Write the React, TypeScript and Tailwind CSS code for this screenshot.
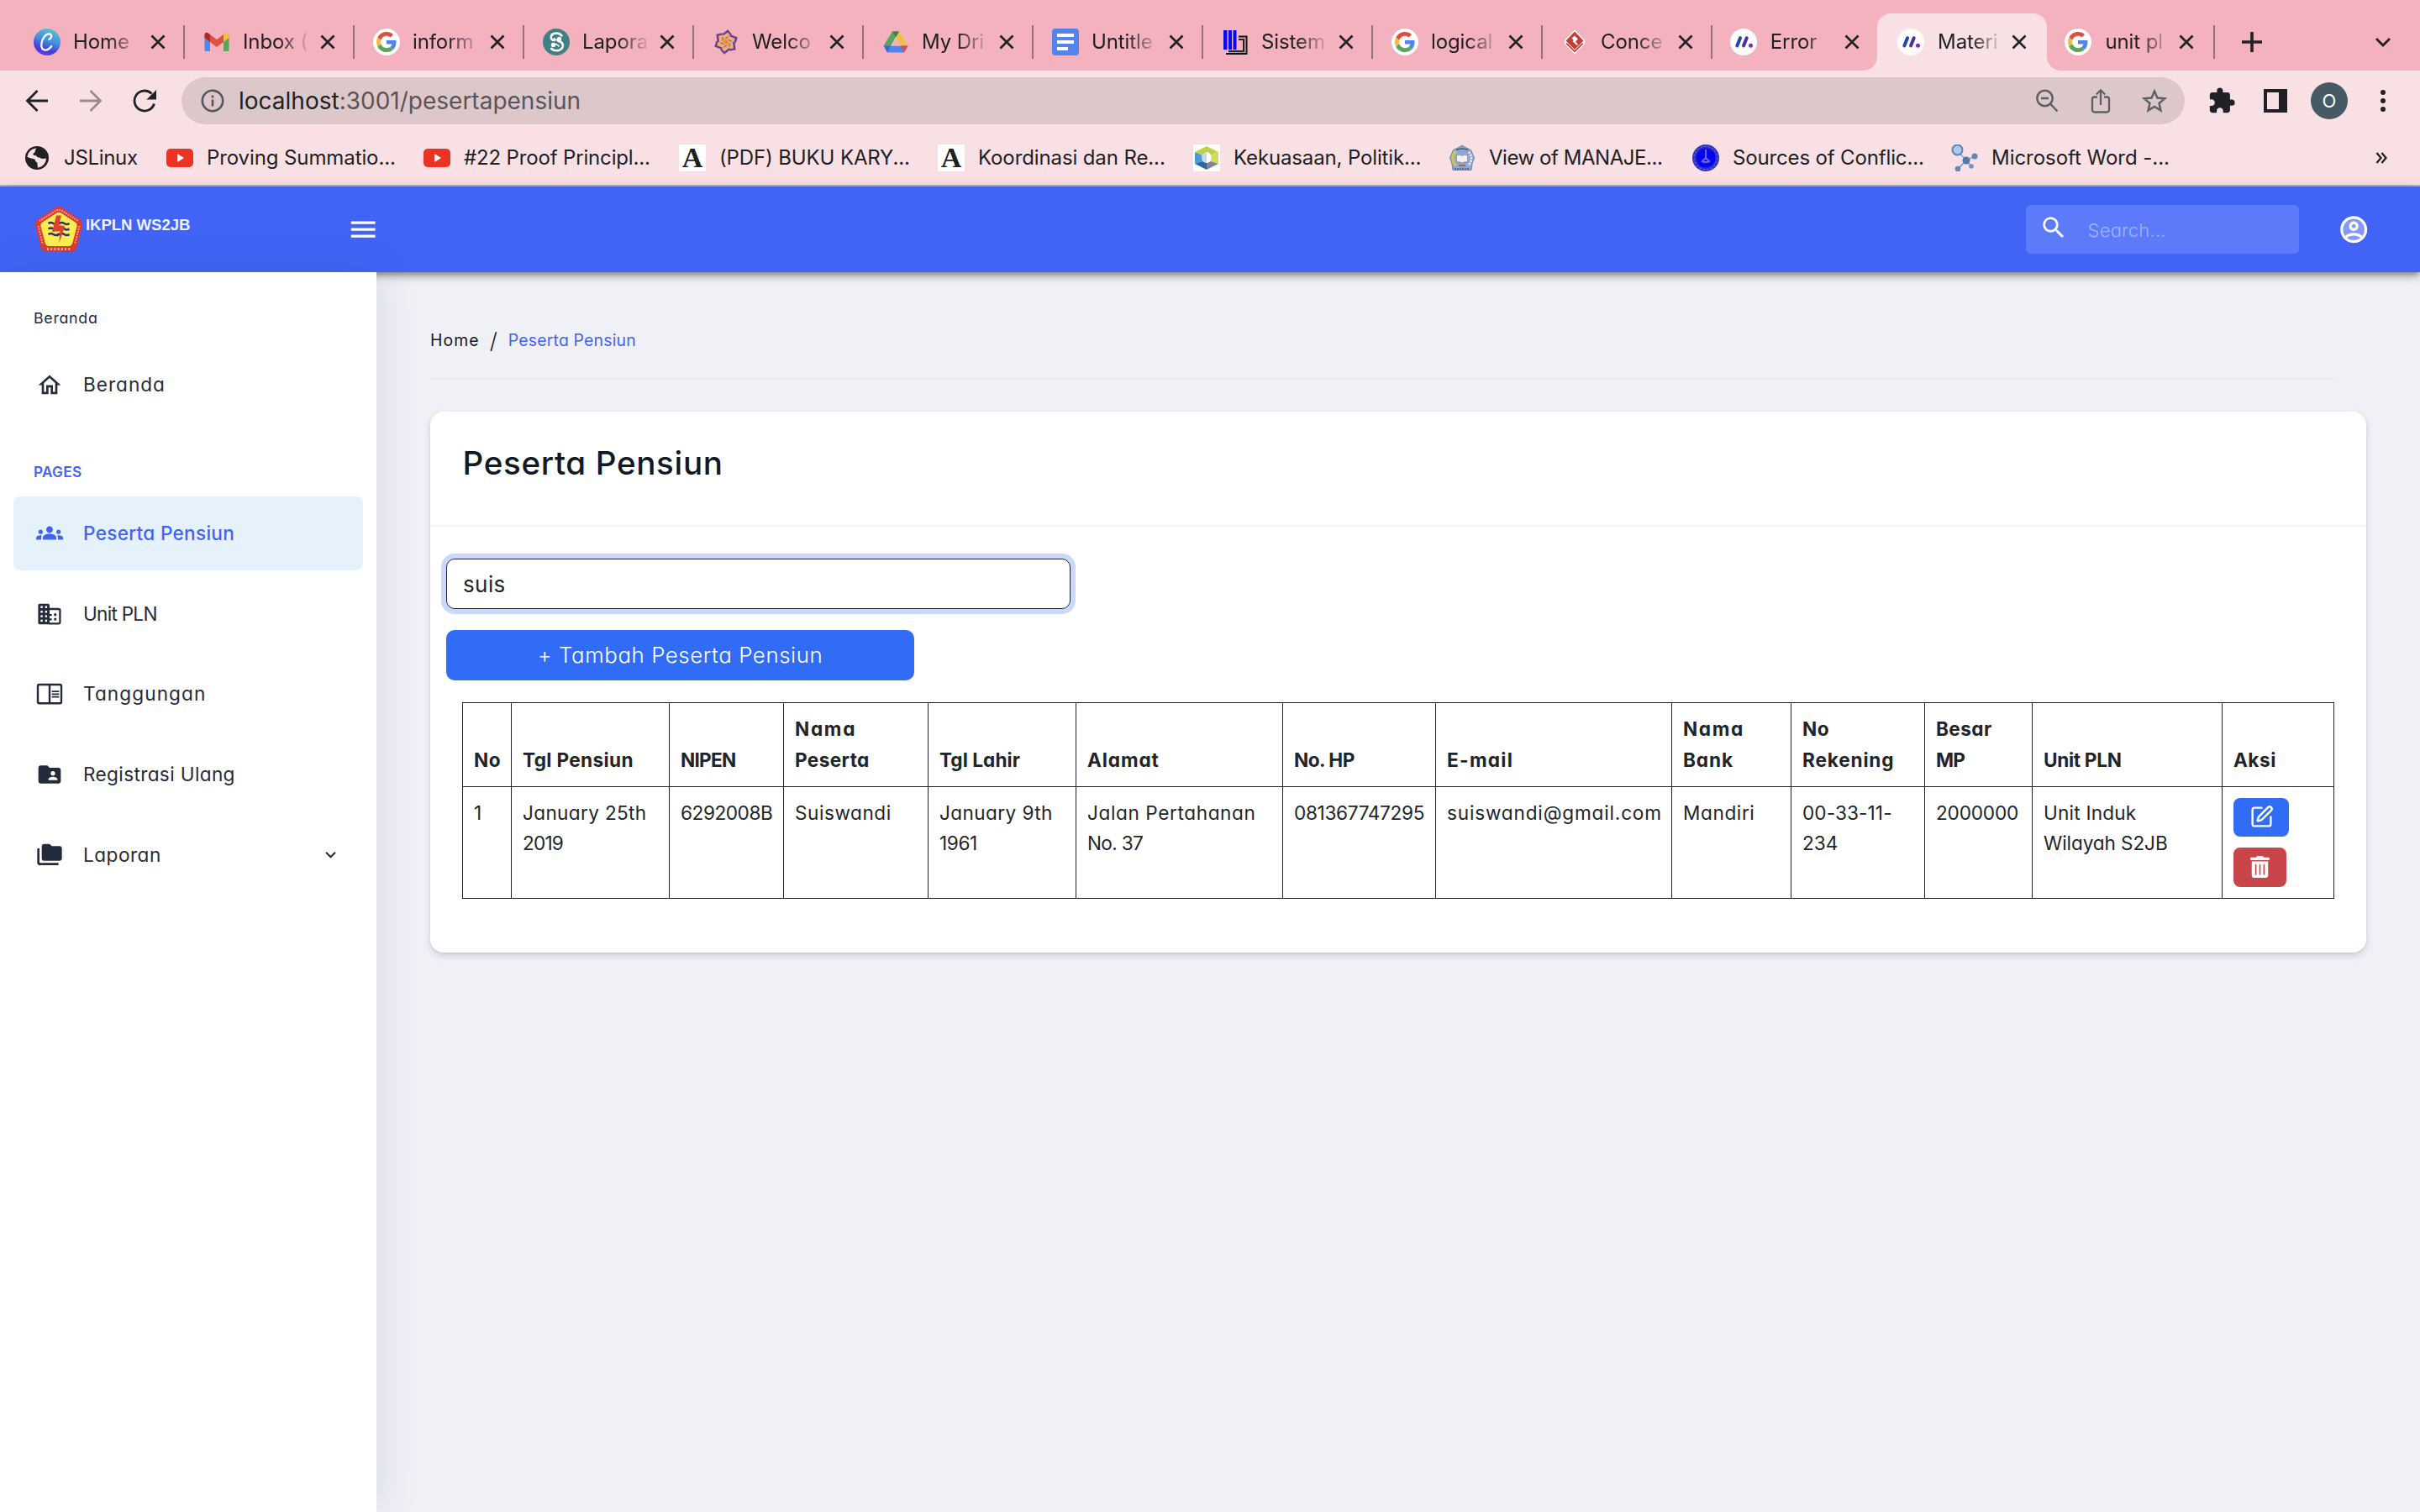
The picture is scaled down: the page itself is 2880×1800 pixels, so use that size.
import type { ReactNode } from 'react';
import { MdExtension, MdFolderCopy, MdFolderShared, MdGroups, MdKeyboardArrowDown, MdMenu, MdOutlineHome, MdSearch } from 'react-icons/md';
import { FaTrashAlt } from 'react-icons/fa';
import { SquarePen } from 'lucide-react';

/* ---------- favicons ---------- */

const CanvaIcon = () => (
  <div className="flex h-8 w-8 items-center justify-center rounded-full bg-[linear-gradient(200deg,#55c3cf_10%,#4a8fdc_45%,#3d3fe0_72%,#8a2ce8_100%)]">
    <svg viewBox="0 0 32 32" className="h-8 w-8" fill="none" stroke="#fff" strokeWidth="2.3" strokeLinecap="round">
      <path d="M18.500 12.800c2.800-.8 4-5.800.6-6.300C14 6 9.200 13 9.200 19.500c0 7.500 7.500 8 12 1.500" />
    </svg>
  </div>
);

const GmailIcon = () => (
  <svg viewBox="0 0 32 32" className="h-8 w-8">
    <path d="M1.500 8v17.500q0 1.500 1.500 1.500h5V12z" fill="#4f86ee" />
    <path d="M30.500 8v17.500q0 1.500-1.500 1.500h-5V12z" fill="#58a55c" />
    <path d="M24 7l3-2c2-1 3.500.5 3.500 2.500V11L24 16z" fill="#f2be42" />
    <path d="M8 7L5 5C3 4 1.500 5.500 1.500 7.500V11L8 16z" fill="#b4271b" />
    <path d="M8 7l8 6.200L24 7v9l-8 6-8-6z" fill="#dd5144" />
  </svg>
);

const GoogleIcon = () => (
  <div className="flex h-8 w-8 items-center justify-center rounded-full bg-white">
    <svg viewBox="0 0 48 48" className="h-6 w-6">
      <path fill="#d85140" d="M24 9.500c3.540 0 6.710 1.220 9.210 3.600l6.850-6.850C35.900 2.380 30.470 0 24 0 14.620 0 6.510 5.380 2.560 13.220l7.980 6.190C12.430 13.720 17.740 9.500 24 9.500z" />
      <path fill="#5383ec" d="M46.980 24.550c0-1.570-.15-3.090-.38-4.550H24v9.020h12.940c-.58 2.960-2.260 5.480-4.780 7.180l7.730 6c4.510-4.180 7.090-10.360 7.090-17.650z" />
      <path fill="#f1be42" d="M10.530 28.590c-.48-1.450-.76-2.990-.76-4.590s.27-3.140.76-4.590l-7.980-6.190C.92 16.460 0 20.120 0 24c0 3.880.92 7.540 2.560 10.780l7.970-6.190z" />
      <path fill="#58a55c" d="M24 48c6.480 0 11.930-2.130 15.890-5.810l-7.730-6c-2.150 1.450-4.920 2.300-8.160 2.300-6.260 0-11.570-4.220-13.470-9.910l-7.980 6.190C6.510 42.620 14.620 48 24 48z" />
    </svg>
  </div>
);

const ScribdIcon = () => (
  <div className="h-8 w-8 rounded-full bg-[#3f7f86]">
    <svg viewBox="0 0 32 32" className="h-8 w-8" fill="none" stroke="#fff" strokeWidth="2.600" strokeLinecap="round">
      <path d="M22.500 8.500C19.500 4.500 11 4.500 9.800 9.500c-.4 3 1.500 4.500 4 4.500" />
      <path d="M18.500 15c4.500.3 7 4.500 4.200 8.500-2.700 3.500-9.200 3.700-12.500.5" />
      <circle cx="19.500" cy="12.500" r="2.700" fill="#fff" stroke="none" />
      <circle cx="12.500" cy="19.500" r="2.700" fill="#fff" stroke="none" />
      <path d="M13.500 11.500c.5 1.800 2.500 2 4 2.500M19 21c-.5-1.800-2.500-2-4-2.500" strokeWidth="1.600" />
    </svg>
  </div>
);

const KnotIcon = () => (
  <svg viewBox="0 0 32 32" className="h-8 w-8" fill="none">
    {[0, 60, 120, 180, 240, 300].map((r) => (
      <g key={r} transform={`rotate(${r} 16 16)`}>
        <path d="M11.500 8L18 3l4 4.500" stroke="#6d4290" strokeWidth="2.600" />
        <path d="M12.500 11.500L18.500 7l2.500 2.500" stroke="#efb04b" strokeWidth="2.200" />
        <path d="M14 13l5-3.500" stroke="#6d4290" strokeWidth="1" />
      </g>
    ))}
    <circle cx="16" cy="16" r="4" fill="#f0a04b" />
    <circle cx="16" cy="16" r="1.800" fill="#e9793e" />
  </svg>
);

const DriveIcon = () => (
  <svg viewBox="0 0 32 32" className="h-8 w-8">
    <path d="M12 3.500h8l10.500 17h-8.700z" fill="#f1be42" />
    <path d="M12 3.500L1.500 20.500h8.700L20 3.500z" fill="#58a55c" />
    <path d="M12 3.500h8L16 10z" fill="#3c8048" />
    <path d="M1.500 20.500h29L26 28.500H6z" fill="#4f86ee" />
    <path d="M1.500 20.500h8.700L6 28.500z" fill="#3a68cf" />
    <path d="M21.800 20.500h8.700L26 28.500z" fill="#d85140" />
    <path d="M16 10l6 10.500H10z" fill="#f4b1be" />
  </svg>
);

const DocsIcon = () => (
  <div className="flex h-8 w-8 flex-col gap-1 rounded bg-[#5383ec]">
    <div className="mt-1.5 ml-1.5 h-1 w-5 bg-white" />
    <div className="ml-1.5 h-1 w-5 bg-white" />
    <div className="ml-1.5 h-1 w-[13px] bg-white" />
  </div>
);

const BinusIcon = () => (
  <svg viewBox="0 0 32 32" className="h-8 w-8">
    <path d="M2 2h4.500v23H2zM8 2h4v23H8zM13.500 2h4v23h-4z" fill="#0a0af0" />
    <path d="M20 9.500h9.500V30H5" fill="none" stroke="#111" strokeWidth="2" />
    <path d="M20 13h6v14H8" fill="none" stroke="#222" strokeWidth="2" />
    <path d="M27.800 11v17.400H8" fill="none" stroke="#999" strokeWidth="1" />
  </svg>
);

const ParadigmIcon = () => (
  <svg viewBox="0 0 32 32" className="h-8 w-8">
    <path d="M16 1.500L28.500 14.500l-1.200 2 1.200 1L16 30.500 3.500 17.500l1.200-1-1.200-2z" fill="#fff" />
    <path d="M16 3.500l10.500 11L16 25 5.500 14.500z" fill="#c04038" />
    <path d="M5.500 18l10.500 10.500L26.500 18l-1.500-1-9 9-9-9z" fill="#c04038" />
    <path d="M12.500 11.500L16 8.500l4 4-3 3 3 3.500-1.500 1-5-5 1.500-1z" fill="#fff" />
  </svg>
);

const MaterialIcon = () => (
  <div className="h-8 w-8 rounded-full bg-white">
    <svg viewBox="0 0 32 32" className="h-8 w-8" fill="none" strokeLinecap="round" strokeWidth="4">
      <path d="M8.300 20.500L12 11.200" stroke="#2545a8" />
      <path d="M16 20.500L19.700 11.200" stroke="#4a32a0" />
      <circle cx="24.500" cy="20.200" r="2.500" fill="#7b2fb0" />
    </svg>
  </div>
);

const GlobeIcon = () => (
  <svg viewBox="0 0 32 32" className="h-8 w-8">
    <circle cx="16" cy="16" r="14" fill="#202124" />
    <path d="M16 4.500c-3 1.500-1 4-3.500 5.500-2 1.200-1 3 1 3 2.500 0 2 2.500 4.500 2.500 2 0 2.500 1.500 5 1.500l4-.5c-.3 6-4.500 10.500-10.500 11 1-2-.5-3 0-5 .3-1.500-2.500-1.500-2.500-3.500s-3-2-5-2.500L4.500 15C5 9 10 4.500 16 4.500z" fill="#fae0e4" />
    <path d="M18 4.500c5 1 9 5 9.300 10.500-1.300 1.500-3.800 1-4.300-.5-.6-1.500-3-.5-3-2.500 0-1.500-2.500-1.500-2-3.500z" fill="#202124" />
  </svg>
);

const YoutubeIcon = () => (
  <div className="flex h-8 w-8 items-center">
    <div className="flex h-[22px] w-8 items-center justify-center rounded-[5px] bg-[#ea3323]">
      <svg viewBox="0 0 10 10" className="ml-0.5 h-2.5 w-2.5"><path d="M1 0l8 5-8 5z" fill="#fff" /></svg>
    </div>
  </div>
);

const AcademiaIcon = () => (
  <div className="flex h-8 w-8 items-center justify-center bg-white font-['Liberation_Serif'] text-[34px] leading-8 font-bold text-[#202124]">A</div>
);

const HexIcon = () => (
  <svg viewBox="0 0 32 32" className="h-8 w-8">
    <path d="M0 0h32v32H0z" fill="#fff" />
    <path d="M16 2l14 7-9 4-5-3-5 3-9-4z" fill="#bfd243" />
    <path d="M30 9v14l-9-3v-7z" fill="#d0dc5a" />
    <path d="M2 9v14l9-3v-7z" fill="#4a9ad4" />
    <path d="M2 23l14 7V22l-5-2z" fill="#2a66a8" />
    <path d="M30 23l-14 7V22l5-2z" fill="#808590" />
    <ellipse cx="16" cy="15.500" rx="6" ry="6.500" fill="#c5d9e8" />
    <path d="M16 9a5.500 6.500 0 010 13z" fill="#fff" />
  </svg>
);

const CrestIcon = () => (
  <svg viewBox="0 0 32 32" className="h-8 w-8">
    <path d="M16 1l4 2.500 6.500 3L30.500 16 28 23l-1 7.500H5L4 23l-2.500-7L5.500 6.500l6.500-3z" fill="#8aa6dc" stroke="#7884a0" strokeWidth="1" />
    <path d="M9 8a11 11 0 000 17" fill="none" stroke="#c9c65a" strokeWidth="3.500" />
    <path d="M24 9a11 11 0 01-1 16" fill="none" stroke="#fff" strokeWidth="2.500" strokeDasharray="2 1.500" />
    <path d="M9.500 13q3.500-1.500 6.500.5 3-2 6.500-.5v8q-3.500-1-6.500 1-3-2-6.500-1z" fill="#f5f0ee" stroke="#777" strokeWidth=".6" />
    <path d="M9 6.500q7-3 14 0" fill="none" stroke="#555" strokeWidth="1.500" />
    <path d="M12 25h8" stroke="#c05040" strokeWidth="1.600" />
    <path d="M7 29h18" stroke="#555" strokeWidth="1.600" strokeDasharray="2 1" />
  </svg>
);

const BlueSealIcon = () => (
  <svg viewBox="0 0 32 32" className="h-8 w-8">
    <circle cx="16" cy="16" r="16" fill="#3030c4" />
    <circle cx="16" cy="16" r="11.500" fill="#0505f0" />
    <circle cx="16" cy="16" r="13.800" fill="none" stroke="#5a5ad0" strokeWidth="1.500" strokeDasharray="2 2.500" />
    <path d="M16 6v12M16 16l-5 5M16 16l5 5M13 21h6" stroke="#6a6ae0" strokeWidth="2" fill="none" />
  </svg>
);

const NodesIcon = () => (
  <svg viewBox="0 0 32 32" className="h-8 w-8">
    <path d="M8 8l10 11 10-5M18 19l-10 10M18 19l6 7" stroke="#8ba6cc" strokeWidth="1.800" fill="none" />
    <circle cx="7.500" cy="6.500" r="6" fill="#a9cbf0" stroke="#5a80b5" strokeWidth="2" />
    <circle cx="18" cy="19" r="4.500" fill="#5078ab" />
    <circle cx="28" cy="14" r="3.500" fill="#5f86b8" />
    <circle cx="8" cy="29" r="3.300" fill="#5f86b8" />
    <circle cx="24" cy="26" r="2.800" fill="#6f92c0" />
  </svg>
);

/* ---------- browser chrome ---------- */

const tabs: { icon: ReactNode; label: string; sep?: boolean; active?: boolean; narrow?: boolean }[] = [
  { icon: <CanvaIcon />, label: 'Home', sep: true },
  { icon: <GmailIcon />, label: 'Inbox (', sep: true },
  { icon: <GoogleIcon />, label: 'inform', sep: true },
  { icon: <ScribdIcon />, label: 'Lapora', sep: true },
  { icon: <KnotIcon />, label: 'Welco', sep: true },
  { icon: <DriveIcon />, label: 'My Dri', sep: true },
  { icon: <DocsIcon />, label: 'Untitle', sep: true },
  { icon: <BinusIcon />, label: 'Sistem', sep: true },
  { icon: <GoogleIcon />, label: 'logical', sep: true },
  { icon: <ParadigmIcon />, label: 'Conce', sep: true },
  { icon: <MaterialIcon />, label: 'Error', narrow: true },
  { icon: <MaterialIcon />, label: 'Materi', narrow: true, active: true },
  { icon: <GoogleIcon />, label: 'unit pl', narrow: true, sep: true },
];

const CloseX = () => (
  <svg viewBox="0 0 18 18" className="h-[18px] w-[18px] shrink-0" stroke="#202124" strokeWidth="2.700">
    <path d="M1.500 1.500l15 15M16.500 1.500l-15 15" />
  </svg>
);

function TabStrip() {
  return (
    <div className="flex h-[84px] bg-[#f4b1be] pl-[17.3px]">
      {tabs.map((t, i) => (
        <div key={i} className={`relative flex shrink-0 items-center pt-4 ${t.narrow ? 'w-[199.3px]' : 'w-[202px]'}`}>
          {t.active && (
            <div className="absolute top-4 right-0 bottom-0 left-[-2.5px] rounded-t-[16px] bg-[#f9e0e4]">
              <div className="absolute bottom-0 left-[-16px] h-4 w-4 bg-[radial-gradient(circle_at_0_0,#f4b1be_15.5px,#f9e0e4_16px)]" />
              <div className="absolute right-[-16px] bottom-0 h-4 w-4 bg-[radial-gradient(circle_at_100%_0,#f4b1be_15.5px,#f9e0e4_16px)]" />
            </div>
          )}
          <div className={`relative flex flex-1 items-center ${t.narrow ? 'pl-[21.5px]' : 'pl-[22.7px]'}`}>
            {t.icon}
            <span className={`[mask-image:linear-gradient(to_right,#000_52%,transparent)] text-[24px] leading-8 tracking-[-0.1px] whitespace-nowrap ${t.narrow ? 'ml-[16px] w-[78px]' : 'ml-[15px] w-[81px]'}`}>{t.label}</span>
            <span className={t.narrow ? 'ml-[10px]' : 'ml-[11px]'}><CloseX /></span>
          </div>
          {t.sep && <div className="mr-[-1px] h-10 w-0.5 bg-[#987079]" />}
        </div>
      ))}
      <div className="flex flex-1 items-center justify-between pt-4 pr-[35px] pl-[33px]">
        <svg viewBox="0 0 24 24" className="h-6 w-6" stroke="#202124" strokeWidth="3.600"><path d="M12 0v24M0 12h24" /></svg>
        <svg viewBox="0 0 18 12" className="h-3 w-[18px]" fill="none" stroke="#202124" strokeWidth="2.800"><path d="M1 2l8 8 8-8" /></svg>
      </div>
    </div>
  );
}

function Toolbar() {
  return (
    <div className="flex h-[72px] items-center pl-[30px]">
      <svg viewBox="0 0 28 28" className="h-7 w-7" fill="none" stroke="#202124" strokeWidth="2.800"><path d="M27 14H3M14.500 2L2.500 14l12 12" /></svg>
      <svg viewBox="0 0 28 28" className="ml-9 h-7 w-7" fill="none" stroke="#9a8b8f" strokeWidth="2.800"><path d="M1 14h24M13.500 2l12 12-12 12" /></svg>
      <svg viewBox="0 0 28 28" className="ml-9 h-7 w-7" fill="none" stroke="#202124" strokeWidth="2.800">
        <path d="M25.500 17.500A12 12 0 1 1 22.500 5.500" />
        <path d="M28 1v11.500H16.500z" fill="#202124" stroke="none" />
      </svg>
      <div className="ml-[30px] flex h-14 w-[2384px] items-center rounded-full bg-[#dcc8cb] pl-[23px]">
        <svg viewBox="0 0 28 28" className="h-7 w-7" fill="none" stroke="#54565b" strokeWidth="2.600">
          <circle cx="14" cy="14" r="12.200" /><path d="M14 12.500v8M14 7.500v3" />
        </svg>
        <span className="ml-[17px] flex-1 text-[28px] leading-8 text-[#5b5456]"><span className="text-[#202124]">localhost</span>:3001/pesertapensiun</span>
        <svg viewBox="0 0 28 28" className="h-7 w-7" fill="none" stroke="#5f5f62" strokeWidth="2.500">
          <circle cx="11.500" cy="11" r="9.200" /><path d="M7 11h9M18 17.500l8.500 9" />
        </svg>
        <svg viewBox="0 0 24 30" className="ml-[38px] h-[30px] w-6" fill="none" stroke="#5f5f62" strokeWidth="2.300">
          <path d="M8 10.500H4.500a2.500 2.500 0 00-2.500 2.500v13a2.500 2.500 0 002.500 2.500h15A2.500 2.500 0 0022 26V13a2.500 2.500 0 00-2.500-2.500H16M12 20V2.500M6.800 7.500L12 2.300l5.200 5.200" />
        </svg>
        <svg viewBox="0 0 30 30" className="mr-[21px] ml-[37px] h-[30px] w-[30px]" fill="none" stroke="#5f5f62" strokeWidth="2.400">
          <path d="M15 3.500l3.400 8 8.700.8-6.600 5.700 2 8.500-7.500-4.500-7.500 4.500 2-8.500-6.600-5.700 8.700-.8z" />
        </svg>
      </div>
      <MdExtension className="ml-[27px] h-[34px] w-[34px] text-[#202124]" />
      <div className="ml-[33px] h-7 w-7 border-4 border-r-[10px] border-[#202124]" />
      <div className="ml-7 flex h-11 w-11 items-center justify-center rounded-full bg-[#455a64] text-[22px] font-normal text-white">O</div>
      <div className="ml-[39px] flex flex-col gap-1">
        <div className="h-1.5 w-1.5 rounded-full bg-[#202124]" />
        <div className="h-1.5 w-1.5 rounded-full bg-[#202124]" />
        <div className="h-1.5 w-1.5 rounded-full bg-[#202124]" />
      </div>
    </div>
  );
}

const bookmarks = [
  { icon: <GlobeIcon />, label: 'JSLinux', cls: 'w-[170px] tracking-[-0.31px]' },
  { icon: <YoutubeIcon />, label: 'Proving Summatio...', cls: 'w-[306px] tracking-[-0.1px]' },
  { icon: <YoutubeIcon />, label: '#22 Proof Principl...', cls: 'w-[304px] tracking-[-0.16px]' },
  { icon: <AcademiaIcon />, label: '(PDF) BUKU KARY...', cls: 'w-[308px] tracking-[-0.13px]' },
  { icon: <AcademiaIcon />, label: 'Koordinasi dan Re...', cls: 'w-[304px] tracking-[-0.11px]' },
  { icon: <HexIcon />, label: 'Kekuasaan, Politik...', cls: 'w-[304px] tracking-[-0.14px]' },
  { icon: <CrestIcon />, label: 'View of MANAJE...', cls: 'w-[290px] tracking-[-0.45px]' },
  { icon: <BlueSealIcon />, label: 'Sources of Conflic...', cls: 'w-[308px] tracking-[-0.15px]' },
  { icon: <NodesIcon />, label: 'Microsoft Word -...', cls: 'w-[300px] tracking-[-0.04px]' },
];

function BookmarkBar() {
  return (
    <div className="flex h-[66px] items-center border-b-2 border-[#c4b0b6] pl-7">
      {bookmarks.map((b) => (
        <div key={b.label} className={`flex shrink-0 items-center gap-4 text-[24px] leading-8 whitespace-nowrap ${b.cls}`}>
          {b.icon}
          <span>{b.label}</span>
        </div>
      ))}
      <svg viewBox="0 0 14 14" className="mr-[39px] ml-auto h-3.5 w-3.5" fill="none" stroke="#202124" strokeWidth="2.300"><path d="M1.500 1l5 6-5 6M7.500 1l5 6-5 6" /></svg>
    </div>
  );
}

/* ---------- application ---------- */

const Logo = () => (
  <svg viewBox="0 0 60 56" className="h-14 w-[60px]">
    <path d="M26 2q4-2.500 8 0l21 14q4 3 3 7l-6 25q-1.500 7-8 7H16q-6.500 0-8-7L2 23q-1-4 3-7z" fill="#dc3b33" />
    <path d="M27.500 8.500q2.500-1.500 5 0l17 11q2.800 2 2 5l-5 19q-1 4.500-5 4.500h-23q-4 0-5-4.500l-5-19q-.8-3 2-5z" fill="#fbee4e" />
    <path d="M7 18L27 5.500q3-1.500 6 0L53 18" fill="none" stroke="#eda49c" strokeWidth="2" strokeDasharray="1.800 1.200" />
    <path d="M5.500 24l5.500 22M54.500 24L49 46" fill="none" stroke="#eda49c" strokeWidth="2" strokeDasharray="1.800 1.400" />
    <path d="M16 51.500h28" stroke="#f6c5bf" strokeWidth="2.400" strokeDasharray="2 2.200" />
    {[21, 27.500, 34].map((y) => (
      <path key={y} d={`M17.500 ${y}q3-2 6 0t6.500 0 6.500 0 6 0`} fill="none" stroke="#33306b" strokeWidth="2.600" />
    ))}
    <path d="M27 11.500h6L30 23l7 1-6.500 20 .8-14-9.300 1z" fill="#e0412f" />
  </svg>
);

function Header() {
  return (
    <header className="flex h-[102px] items-center bg-[#4164f7] pl-[40px] shadow-[0_3px_6px_-1px_rgba(0,0,0,0.3),0_6px_8px_0_rgba(0,0,0,0.16),0_2px_16px_0_rgba(0,0,0,0.14)]">
      <Logo />
      <span className="mb-[10px] ml-0.5 font-['Liberation_Sans'] text-[18.6px] leading-6 font-bold tracking-[-0.06px] whitespace-nowrap text-[#eef1ff]">IKPLN WS2JB</span>
      <MdMenu className="ml-[187px] h-[38.4px] w-[38.4px] text-white" />
      <div className="ml-auto flex h-[58px] w-[325px] items-center rounded-md bg-[#5b7bfa] pl-4">
        <MdSearch className="-mt-1 h-[34px] w-[34px] text-white" />
        <span className="mt-0.5 ml-6 text-[22px] font-light tracking-[0.2px] text-[#a4b4fd]">Search...</span>
      </div>
      <svg viewBox="0 0 24 24" className="mr-[60px] ml-[46px] h-[38.4px] w-[38.4px]" fill="#fff">
        <circle cx="12" cy="12" r="9.500" opacity=".35" />
        <path d="M12 2C6.480 2 2 6.480 2 12s4.480 10 10 10 10-4.480 10-10S17.520 2 12 2zM7.070 18.280c.43-.9 3.050-1.780 4.930-1.780s4.510.88 4.930 1.780C15.570 19.360 13.860 20 12 20s-3.570-.64-4.930-1.720zm11.290-1.450c-1.430-1.740-4.900-2.330-6.360-2.330s-4.930.59-6.360 2.330C4.620 15.490 4 13.820 4 12c0-4.410 3.590-8 8-8s8 3.590 8 8c0 1.820-.62 3.490-1.640 4.830zM12 6c-1.940 0-3.500 1.560-3.500 3.500S10.060 13 12 13s3.500-1.560 3.500-3.500S13.940 6 12 6zm0 5c-.83 0-1.500-.67-1.500-1.500S11.170 8 12 8s1.500.67 1.500 1.500S12.830 11 12 11z" />
      </svg>
    </header>
  );
}

const DomainIcon = () => (
  <svg viewBox="0 0 24 24" className="h-8 w-8">
    <rect x="1.800" y="2.800" width="10.200" height="18.400" rx="1.300" fill="#242b3a" />
    <rect x="10.500" y="7.500" width="10.800" height="13" rx="1.300" fill="#fff" stroke="#242b3a" strokeWidth="1.700" />
    <rect x="9.500" y="5" width="2.500" height="16" fill="#242b3a" />
    {[4.800, 9, 13, 17].map((y) => (
      <g key={y} fill="#fff"><rect x="4" y={y} width="1.800" height="1.900" /><rect x="8" y={y} width="1.800" height="1.900" /></g>
    ))}
    <path d="M12 12h2v1.700h-2zM12 16h2v1.700h-2zM16 11.500h2.100v2.100H16zM16 15.600h2.100v2.100H16z" fill="#242b3a" />
  </svg>
);

const ReaderIcon = () => (
  <svg viewBox="0 0 24 24" className="h-8 w-8" fill="none" stroke="#242b3a" strokeWidth="1.800">
    <rect x="1.500" y="3.800" width="21" height="16.600" rx="1.300" />
    <path d="M12 4v16" />
    <path d="M14 9.800h6.500M14 12.300h6.500M14 14.800h6.500" strokeWidth="1.300" />
  </svg>
);

function NavItem({ icon, label, cls, active, chevron }: { icon: ReactNode; label: string; cls: string; active?: boolean; chevron?: boolean }) {
  return (
    <div className={`mx-4 mb-[7.8px] flex h-[88px] items-center rounded-lg pl-[26.5px] text-[22.6px] ${active ? 'bg-[#e5f2fc] font-medium text-[#4164f7]' : 'text-[#242b3a]'}`}>
      {icon}
      <span className={`ml-[24.5px] ${cls}`}>{label}</span>
      {chevron && <MdKeyboardArrowDown className="mr-[26px] ml-auto h-[25px] w-[25px]" />}
    </div>
  );
}

function Sidebar() {
  return (
    <aside className="relative z-10 w-[448px] shrink-0 bg-white pt-[43px] shadow-[0_0_48px_rgba(50,60,80,0.14)]">
      <div className="pl-[40px] text-[17.8px] leading-6 tracking-[0.7px] text-[#242b3a]">Beranda</div>
      <div className="pt-[23px]">
        <NavItem icon={<MdOutlineHome className="h-[33px] w-8" />} label="Beranda" cls="tracking-[1px]" />
      </div>
      <div className="pt-[40px] pb-[17px] pl-[40px] text-[17.2px] leading-6 font-semibold tracking-[0.29px] text-[#4164f7]">PAGES</div>
      <NavItem active icon={<MdGroups className="h-[33px] w-8" />} label="Peserta Pensiun" cls="tracking-[0.28px]" />
      <NavItem icon={<DomainIcon />} label="Unit PLN" cls="tracking-[-0.74px]" />
      <NavItem icon={<ReaderIcon />} label="Tanggungan" cls="tracking-[1.1px]" />
      <NavItem icon={<MdFolderShared className="h-8 w-8" />} label="Registrasi Ulang" cls="tracking-[0.36px]" />
      <NavItem chevron icon={<MdFolderCopy className="h-8 w-8" />} label="Laporan" cls="tracking-[0.5px]" />
    </aside>
  );
}

type Line = [string, string];
const columns: { col: string; head: Line[]; body: Line[] }[] = [
  { col: 'w-[58px]', head: [['No', 'tracking-[0.5px]']], body: [['1', '']] },
  { col: 'w-[188px]', head: [['Tgl Pensiun', 'tracking-[0.35px]']], body: [['January 25th', 'tracking-[0.34px]'], ['2019', 'tracking-[-0.8px]']] },
  { col: 'w-[136px]', head: [['NIPEN', 'tracking-[-0.75px]']], body: [['6292008B', 'tracking-[-0.45px]']] },
  { col: 'w-[172px]', head: [['Nama', 'tracking-[1.7px]'], ['Peserta', 'tracking-[0.4px]']], body: [['Suiswandi', 'tracking-[0.55px]']] },
  { col: 'w-[176px]', head: [['Tgl Lahir', 'tracking-[0.05px]']], body: [['January 9th', 'tracking-[0.4px]'], ['1961', 'tracking-[-0.4px]']] },
  { col: 'w-[246px]', head: [['Alamat', 'tracking-[0.9px]']], body: [['Jalan Pertahanan', 'tracking-[0.6px]'], ['No. 37', 'tracking-[-0.7px]']] },
  { col: 'w-[182px]', head: [['No. HP', 'tracking-[-0.5px]']], body: [['081367747295', 'tracking-[-0.32px]']] },
  { col: 'w-[281px]', head: [['E-mail', 'tracking-[1.3px]']], body: [['suiswandi@gmail.com', 'tracking-[0.82px]']] },
  { col: 'w-[142px]', head: [['Nama', 'tracking-[1.6px]'], ['Bank', 'tracking-[0.9px]']], body: [['Mandiri', 'tracking-[0.6px]']] },
  { col: 'w-[159px]', head: [['No', 'tracking-[0.5px]'], ['Rekening', 'tracking-[0.85px]']], body: [['00-33-11-', 'tracking-[0.1px]'], ['234', 'tracking-[0px]']] },
  { col: 'w-[128px]', head: [['Besar', 'tracking-[0.4px]'], ['MP', 'tracking-[-0.8px]']], body: [['2000000', 'tracking-[-0.18px]']] },
  { col: 'w-[226px]', head: [['Unit PLN', 'tracking-[-0.3px]']], body: [['Unit Induk', 'tracking-[0.2px]'], ['Wilayah S2JB', 'tracking-[-0.1px]']] },
  { col: 'w-[133px]', head: [['Aksi', 'tracking-[0.5px]']], body: [] },
];

const Lines = ({ lines }: { lines: Line[] }) => (
  <>
    {lines.map(([text, cls]) => (
      <span key={text} className={`block ${cls}`}>{text}</span>
    ))}
  </>
);

function PesertaTable() {
  return (
    <table className="mt-[25.5px] ml-[38px] w-[2228px] table-fixed border-collapse text-left text-[22.6px] text-[#212529]">
      <colgroup>{columns.map((c, i) => <col key={i} className={c.col} />)}</colgroup>
      <thead>
        <tr className="h-[100px]">
          {columns.map((c, i) => (
            <th key={i} className="border border-[#212529] pb-[13px] pl-[13px] align-bottom leading-[37px] font-bold whitespace-nowrap"><Lines lines={c.head} /></th>
          ))}
        </tr>
      </thead>
      <tbody>
        <tr className="h-[133px]">
          {columns.map((c, i) => (
            <td key={i} className="border border-[#212529] pt-[13px] pl-[13px] align-top leading-[36px] whitespace-nowrap">
              {c.body.length > 0 ? (
                <Lines lines={c.body} />
              ) : (
                <div className="flex flex-col items-start gap-[13px]">
                  <button className="flex h-[46px] w-[66px] items-center justify-center rounded-lg bg-[#306cf6]"><SquarePen className="h-[29px] w-[29px] text-white" strokeWidth={2} /></button>
                  <button className="flex h-[47px] w-[63px] items-center justify-center rounded-lg bg-[#ca454a]"><FaTrashAlt className="h-[26px] w-[23px] text-white" /></button>
                </div>
              )}
            </td>
          ))}
        </tr>
      </tbody>
    </table>
  );
}

function Main() {
  return (
    <main className="flex-1 pl-16">
      <div className="flex h-[128px] w-[2266px] items-center border-b-2 border-[#e9eaef] pt-[38px]">
        <span className="text-[19.4px] tracking-[1.1px] text-[#111827]">Home</span>
        <span className="ml-[12px] text-[26px] leading-8 font-light text-[#111827]">/</span>
        <span className="ml-[13px] text-[19.4px] tracking-[0.2px] text-[#4164f7]">Peserta Pensiun</span>
      </div>
      <section className="mt-[38px] h-[644px] w-[2304px] rounded-[16px] bg-white shadow-[0_4px_8px_rgba(40,45,70,0.16),0_1px_3px_rgba(40,45,70,0.08)]">
        <h1 className="h-[137px] border-b-2 border-[#f6f6f8] pt-[37px] pl-[38.5px] text-[38.6px] leading-[48px] font-medium tracking-[0.65px] text-[#121926]">Peserta Pensiun</h1>
        <div className="mt-[38px] ml-[19px] flex h-[60px] w-[743px] items-center rounded-[10px] border border-[#212529] pl-[19px] text-[26px] tracking-[0.4px] text-[#212529] shadow-[0_0_0_6px_#cad8fd]">suis</div>
        <button className="mt-[25px] ml-[19px] flex h-[60px] w-[557px] items-center justify-center rounded-[10px] bg-[#306cf6] text-[25.8px] font-[350] tracking-[0.6px] text-white">+ Tambah Peserta Pensiun</button>
        <PesertaTable />
      </section>
    </main>
  );
}

export default function App() {
  return (
    <div className="flex h-[1800px] w-[2880px] flex-col overflow-hidden bg-[#f0f1f7] font-['Inter',sans-serif] text-[#202124]">
      <div className="bg-[#f9e0e4]">
        <TabStrip />
        <Toolbar />
        <BookmarkBar />
      </div>
      <div className="flex flex-1 flex-col [font-feature-settings:'cv11']">
        <Header />
        <div className="flex flex-1">
          <Sidebar />
          <Main />
        </div>
      </div>
    </div>
  );
}
